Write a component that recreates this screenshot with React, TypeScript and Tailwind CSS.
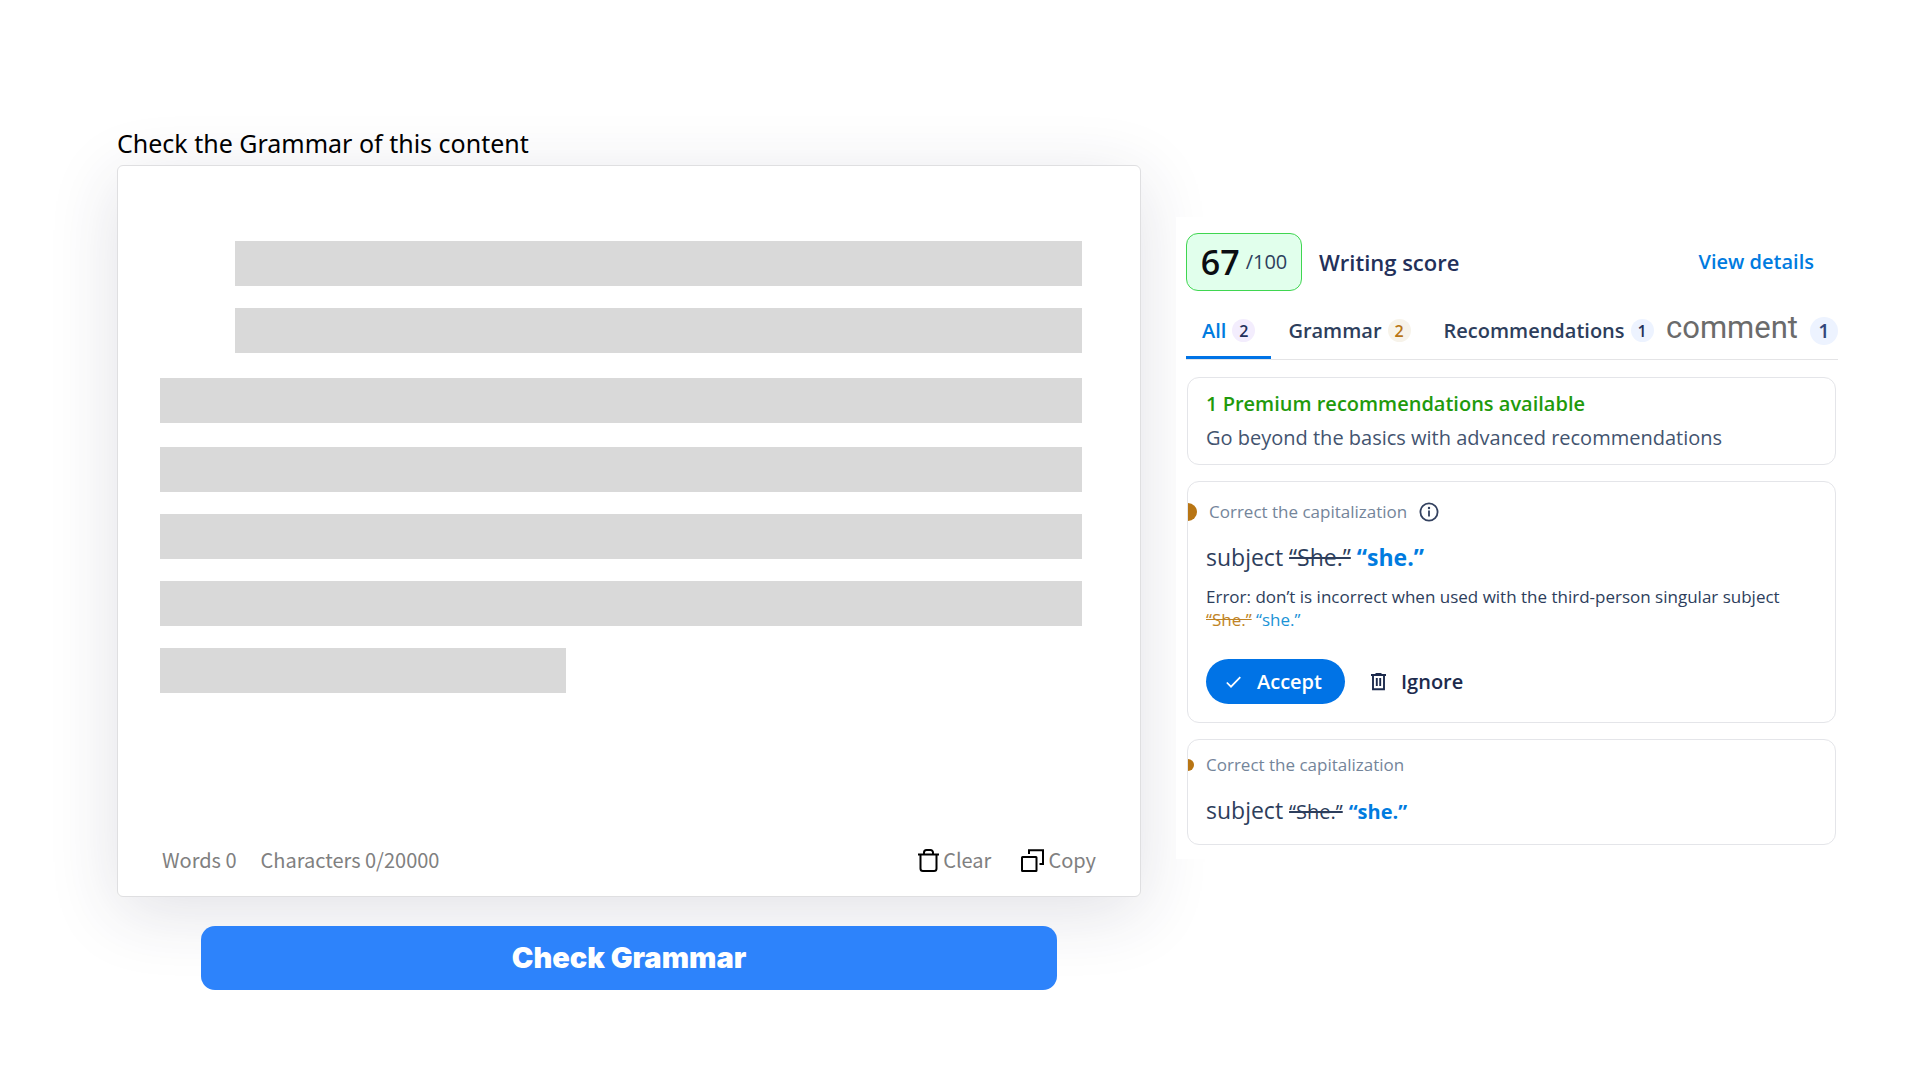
import type { ReactNode } from "react";

const tabs = [
  { label: "All", count: 2, tab: "border-[#0073e6] px-4 text-[#007bdf]", badge: "bg-[#f3edfd] text-[#23305a]" },
  { label: "Grammar", count: 2, tab: "border-transparent px-[17px] text-[#2d3e5c]", badge: "bg-[#f7f3ea] text-[#b87514]" },
  { label: "Recommendations", count: 1, tab: "border-transparent pl-4 text-[#2d3e5c]", badge: "bg-[#edf3ff] text-[#23305a]" }
];

const lines = [
  "ml-[75px] mb-[22px]",
  "ml-[75px] mb-[25px]",
  "mb-[24px]",
  "mb-[22px]",
  "mb-[22px]",
  "mb-[22px]",
  "w-[44%]"
];

function ClearIcon() {
  return (
    <svg width="21" height="23" viewBox="0 0 21 23" fill="none" stroke="#000" strokeWidth="2" aria-hidden="true">
      <path d="M0 5.5h21M2.500 5.500V19.500a2.500 2.500 0 0 0 2.500 2.500h11a2.500 2.500 0 0 0 2.500-2.500V5.500" />
      <path d="M6 5V3.500A2.500 2.500 0 0 1 8.500 1h4A2.500 2.500 0 0 1 15 3.500V5" />
    </svg>
  );
}

function CopyIcon() {
  return (
    <svg width="23" height="23" viewBox="0 0 23 23" fill="none" stroke="#000" strokeWidth="2" aria-hidden="true">
      <rect x="1" y="8" width="14.500" height="14" rx="0.500" />
      <path d="M8 5V1.200h14V15H18.500" />
    </svg>
  );
}

function InfoIcon() {
  return (
    <svg width="20" height="20" viewBox="0 0 20 20" aria-hidden="true">
      <circle cx="10" cy="10" r="8.600" fill="none" stroke="#33415f" strokeWidth="1.800" />
      <circle cx="10" cy="6" r="1.200" fill="#33415f" />
      <path d="M10 8.600V14.500" stroke="#33415f" strokeWidth="1.800" />
    </svg>
  );
}

function IgnoreIcon() {
  return (
    <svg width="15" height="18" viewBox="0 0 15 18" fill="none" stroke="#1d2b4d" strokeWidth="1.900" aria-hidden="true">
      <path d="M0 2H15M4.500 1H10.500M2 2V16.200H13V2M5.800 5V13M9.200 5V13" />
    </svg>
  );
}

function Card({ className, children }: { className: string; children: ReactNode }) {
  return <section className={`rounded-xl border border-[#e4e5e9] bg-white ${className}`}>{children}</section>;
}

export default function App() {
  return (
    <div className="grid min-h-screen grid-cols-[minmax(0,1024fr)_minmax(0,662fr)] items-start gap-[35px] overflow-x-hidden bg-white pr-[82px] pl-[117px] font-['Open_Sans',sans-serif]">
      <main className="pt-[125px]">
        <h1 className="mb-1 font-['Noto_Sans',sans-serif] text-[25px] leading-9 text-black">Check the Grammar of this content</h1>

        <div className="flex min-h-[732px] flex-col justify-between rounded-md border border-[#dfdfe1] bg-white pt-[75px] pr-11 pb-5 pl-[42px] shadow-[0_15px_70px_rgba(40,40,80,0.14)]">
          <div className="pr-[14px]">
            {lines.map((line, i) => (
              <div key={i} className={`h-[45px] bg-[#d9d9d9] ${line}`} />
            ))}
          </div>
          <div className="flex items-center justify-between pl-[2px] font-['Noto_Sans_CJK_SC',sans-serif] text-xl leading-8 text-[#808080]">
            <div className="flex gap-6">
              <span>Words 0</span>
              <span>Characters 0/20000</span>
            </div>
            <div className="flex gap-[30px]">
              <button type="button" className="flex items-center gap-1">
                <ClearIcon />
                Clear
              </button>
              <button type="button" className="flex items-center gap-1">
                <CopyIcon />
                Copy
              </button>
            </div>
          </div>
        </div>

        <div className="relative mt-[29px] px-[84px]">
          <button
            type="button"
            className="h-16 w-full rounded-[14px] bg-[#2d83fb] font-['Inter',sans-serif] text-[29px] font-black text-white"
          >
            Check Grammar
          </button>
        </div>
      </main>

      <aside className="relative mt-[217px] bg-white pt-4 pb-[14px] pl-[10px] text-[#2d3e5c]">
        <header className="flex items-center">
          <div className="flex h-[58px] w-[116px] items-center justify-center gap-[6px] rounded-xl border border-[#3fd650] bg-[#e1ffec]">
            <span className="text-[34px] leading-10 font-semibold text-[#0b0d12]">67</span>
            <span className="text-xl font-medium">/100</span>
          </div>
          <h2 className="ml-[17px] text-[22px] font-semibold text-[#23305a]">Writing score</h2>
          <a href="#details" className="mr-6 ml-auto text-xl font-semibold text-[#007bdf]">
            View details
          </a>
        </header>

        <nav className="mt-[21px] flex h-12 items-stretch border-b border-[#e4e4e6] whitespace-nowrap">
          {tabs.map((tab) => (
            <button key={tab.label} type="button" className={`flex items-center gap-[6px] border-b-3 pb-[7px] text-xl font-semibold ${tab.tab}`}>
              {tab.label}
              <span className={`flex size-[23px] items-center justify-center rounded-full text-base ${tab.badge}`}>{tab.count}</span>
            </button>
          ))}
          <button type="button" className="ml-auto flex items-start gap-3 font-['Roboto',sans-serif] text-[31px] leading-8 text-[#6b6b6b]">
            comment
            <span className="mt-[5px] flex size-7 items-center justify-center rounded-full bg-[#edf3ff] font-['Open_Sans',sans-serif] text-xl font-semibold text-[#33467a]">
              1
            </span>
          </button>
        </nav>

        <div className="mt-[17px] mr-[2px] ml-px flex flex-col gap-4">
          <Card className="h-[88px] px-[18px] pt-[9px]">
            <p className="text-xl leading-[34px] font-semibold text-[#1f9a0c]">1 Premium recommendations available</p>
            <p className="text-xl leading-[34px] text-[#43546f]">Go beyond the basics with advanced recommendations</p>
          </Card>

          <Card className="pb-[18px]">
            <div className="flex items-center pt-4">
              <span className="h-[18px] w-[9px] rounded-r-full bg-[#b87514]" />
              <span className="mr-3 ml-3 text-[17px] leading-7 text-[#74859a]">Correct the capitalization</span>
              <InfoIcon />
            </div>
            <div className="px-[18px]">
              <p className="mt-[15px] text-[23px] leading-8">
                subject <s>“She.”</s> <b className="text-[#007bdf]">“she.”</b>
              </p>
              <p className="mt-3 text-[17px] leading-[23px]">
                Error: don’t is incorrect when used with the third-person singular subject{" "}
                <s className="text-[#c08426]">“She.”</s> <span className="text-[#1b93d6]">“she.”</span>
              </p>
              <div className="mt-7 flex items-center gap-[26px]">
                <button
                  type="button"
                  className="flex h-[45px] w-[139px] items-center gap-4 rounded-full bg-[#0073e6] pl-5 text-xl font-semibold text-white"
                >
                  <svg width="15" height="12" viewBox="0 0 15 12" fill="none" stroke="#fff" strokeWidth="1.700" aria-hidden="true">
                    <path d="M0.800 6.500L5 10.700L14.300 1.200" />
                  </svg>
                  Accept
                </button>
                <button type="button" className="flex items-center gap-[15px] text-xl font-semibold text-[#1d2b4d]">
                  <IgnoreIcon />
                  Ignore
                </button>
              </div>
            </div>
          </Card>

          <Card className="pb-[18px]">
            <div className="flex items-center pt-[11px]">
              <span className="h-3 w-[6px] rounded-r-full bg-[#b87514]" />
              <span className="ml-3 text-[17px] leading-7 text-[#74859a]">Correct the capitalization</span>
            </div>
            <p className="mt-[15px] px-[18px] text-[23px] leading-8">
              subject <s className="text-xl">“She.”</s> <b className="text-xl text-[#007bdf]">“she.”</b>
            </p>
          </Card>
        </div>
      </aside>
    </div>
  );
}
